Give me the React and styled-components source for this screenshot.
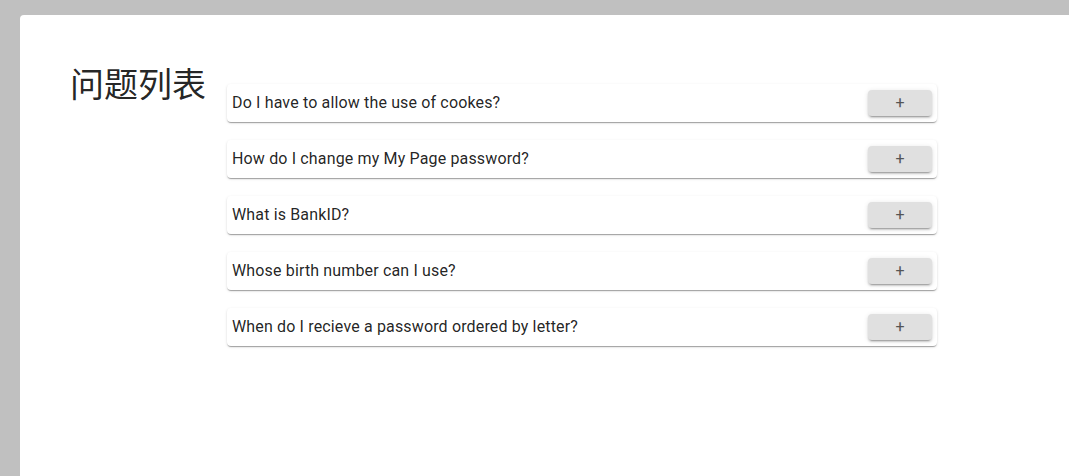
import styled, { createGlobalStyle } from "styled-components";

const Global = createGlobalStyle`
  html, body {
    margin: 0;
    padding: 0;
    height: 100%;
    background: #c0c0c0;
  }
  #root {
    height: 100%;
  }
`;

const Panel = styled.div`
  margin: 15px 0 0 20px;
  height: calc(100% - 15px);
  box-sizing: border-box;
  background: #fff;
  border-radius: 4px 0 0 0;
  padding: 50px 50px;
  display: flex;
  align-items: flex-start;
  gap: 21px;
  font-family: Roboto, "Noto Sans CJK SC", sans-serif;
`;

const Title = styled.h1`
  margin: 0;
  font-family: Roboto, "Noto Sans CJK SC", sans-serif;
  font-size: 34px;
  font-weight: 400;
  line-height: 1.235;
  color: rgba(0, 0, 0, 0.87);
  white-space: nowrap;
`;

const List = styled.div`
  width: 710px;
  margin-top: 19px;
  display: flex;
  flex-direction: column;
  gap: 18px;
`;

const Card = styled.div`
  display: flex;
  align-items: center;
  justify-content: space-between;
  padding: 6px 5px;
  background: #fff;
  border-radius: 4px;
  box-shadow: 0px 2px 1px -1px rgba(0, 0, 0, 0.2),
    0px 1px 1px 0px rgba(0, 0, 0, 0.14), 0px 1px 3px 0px rgba(0, 0, 0, 0.12);
`;

const Question = styled.span`
  font-size: 16px;
  line-height: 1.5;
  letter-spacing: 0.15px;
  color: rgba(0, 0, 0, 0.87);
`;

const ToggleButton = styled.button`
  width: 64px;
  height: 26px;
  border: none;
  border-radius: 4px;
  background: #e0e0e0;
  color: #555;
  font-family: Roboto, sans-serif;
  font-size: 16px;
  line-height: 1;
  padding: 0;
  display: flex;
  align-items: center;
  justify-content: center;
  cursor: pointer;
  box-shadow: 0px 3px 1px -2px rgba(0, 0, 0, 0.2),
    0px 2px 2px 0px rgba(0, 0, 0, 0.14), 0px 1px 5px 0px rgba(0, 0, 0, 0.12);
`;

const questions = [
  "Do I have to allow the use of cookes?",
  "How do I change my My Page password?",
  "What is BankID?",
  "Whose birth number can I use?",
  "When do I recieve a password ordered by letter?",
];

const App = () => {
  return (
    <>
      <Global />
      <Panel>
        <Title>问题列表</Title>
        <List>
          {questions.map((q) => (
            <Card key={q}>
              <Question>{q}</Question>
              <ToggleButton>+</ToggleButton>
            </Card>
          ))}
        </List>
      </Panel>
    </>
  );
};

export default App;
